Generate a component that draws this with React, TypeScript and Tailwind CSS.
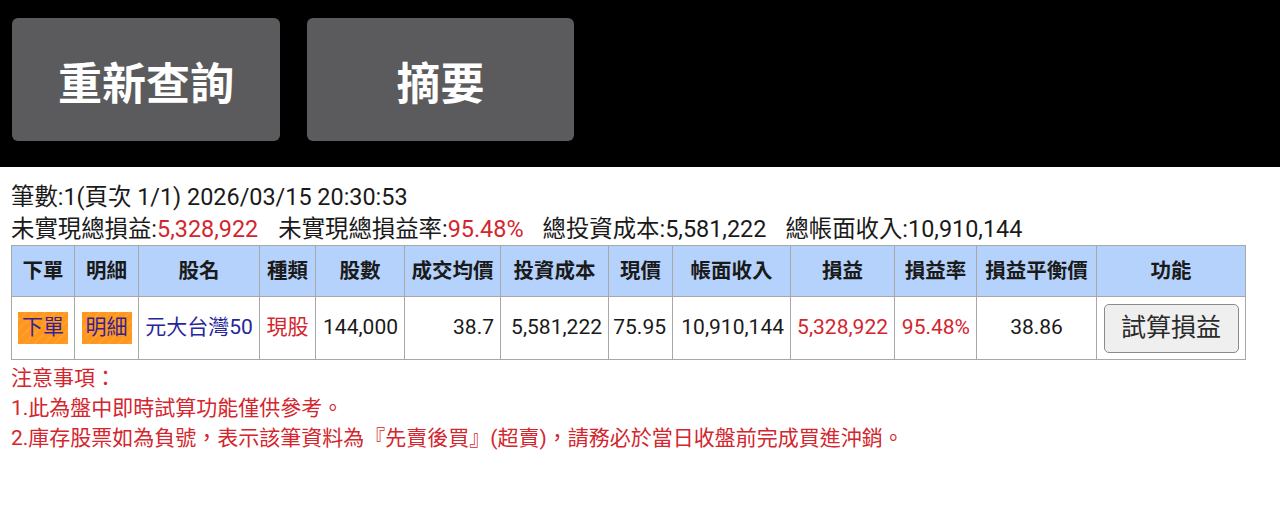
import React from 'react';

const font = { fontFamily: 'Roboto, "Noto Sans CJK TC", sans-serif' };

const headers = [
  { label: '下單', w: 'w-[63px]' },
  { label: '明細', w: 'w-[64px]' },
  { label: '股名', w: 'w-[121px]' },
  { label: '種類', w: 'w-[56px]' },
  { label: '股數', w: 'w-[89px]' },
  { label: '成交均價', w: 'w-[96px]' },
  { label: '投資成本', w: 'w-[108px]' },
  { label: '現價', w: 'w-[64px]' },
  { label: '帳面收入', w: 'w-[118px]' },
  { label: '損益', w: 'w-[104px]' },
  { label: '損益率', w: 'w-[82px]' },
  { label: '損益平衡價', w: 'w-[120px]' },
  { label: '功能', w: 'w-[149px]' },
];

const cell = 'border border-[#a8a8a8] whitespace-nowrap';
const num = `${cell} text-right pr-[6px] pl-0`;

const OrangeTag = ({ children }: { children: React.ReactNode }) => (
  <span className="inline-flex h-[32px] w-[50px] items-center justify-center bg-[repeating-linear-gradient(135deg,#ff971d_0px,#ff971d_5px,#ff9f30_5px,#ff9f30_7px)] text-[21px] text-[#3a1f8f]">
    {children}
  </span>
);

export default function App() {
  return (
    <div className="w-[1280px] h-[507px] bg-white overflow-hidden" style={font}>
      <div className="flex h-[167px] gap-[27px] bg-black px-[12px] pt-[18px]">
        <button className="flex h-[123px] w-[268px] items-center justify-center rounded-[6px] bg-[#5b5b5d] pt-[10px] text-[44px] font-bold text-white">
          重新查詢
        </button>
        <button className="flex h-[123px] w-[267px] items-center justify-center rounded-[6px] bg-[#5b5b5d] pt-[10px] text-[44px] font-bold text-white">
          摘要
        </button>
      </div>

      <div className="px-[11px] pt-[14px]">
        <div className="text-[23.4px] leading-[32px] text-[#1a1a1a] whitespace-nowrap">
          筆數:1(頁次 1/1) 2026/03/15 20:30:53
        </div>
        <div className="text-[23.4px] leading-[32px] text-[#1a1a1a] whitespace-nowrap">
          未實現總損益:<span className="text-[#d3262e]">5,328,922</span>
          <span className="inline-block w-[20px]" />
          未實現總損益率:<span className="text-[#d3262e]">95.48%</span>
          <span className="inline-block w-[19px]" />
          總投資成本:5,581,222
          <span className="inline-block w-[19px]" />
          總帳面收入:10,910,144
        </div>

        <table className="w-[1235px] table-fixed border-collapse text-[21px] text-[#1a1a1a]">
          <thead>
            <tr className="h-[51px] bg-[#b4d2fb]">
              {headers.map((h) => (
                <th key={h.label} className={`${cell} ${h.w} p-0 text-center text-[20.5px] font-bold`}>
                  {h.label}
                </th>
              ))}
            </tr>
          </thead>
          <tbody>
            <tr className="h-[63px]">
              <td className={`${cell} p-0 text-center`}>
                <OrangeTag>下單</OrangeTag>
              </td>
              <td className={`${cell} p-0 text-center`}>
                <OrangeTag>明細</OrangeTag>
              </td>
              <td className={`${cell} p-0 text-center text-[#26269a]`}>元大台灣50</td>
              <td className={`${cell} p-0 text-center text-[#d3262e]`}>現股</td>
              <td className={num}>144,000</td>
              <td className={num}>38.7</td>
              <td className={num}>5,581,222</td>
              <td className={num}>75.95</td>
              <td className={num}>10,910,144</td>
              <td className={`${num} text-[#d3262e]`}>5,328,922</td>
              <td className={`${num} text-[#d3262e]`}>95.48%</td>
              <td className={`${cell} p-0 text-center`}>38.86</td>
              <td className={`${cell} p-0 text-center`}>
                <button className="h-[49px] w-[135px] rounded-[5px] border border-[#8a8a8a] bg-[#efefef] text-[25px] text-[#2a2a2a]">
                  試算損益
                </button>
              </td>
            </tr>
          </tbody>
        </table>

        <div className="pt-[3px] text-[21px] leading-[30px] text-[#d3262e] whitespace-nowrap">
          <div>注意事項：</div>
          <div>1.此為盤中即時試算功能僅供參考。</div>
          <div>2.庫存股票如為負號，表示該筆資料為『先賣後買』(超賣)，請務必於當日收盤前完成買進沖銷。</div>
        </div>
      </div>
    </div>
  );
}
